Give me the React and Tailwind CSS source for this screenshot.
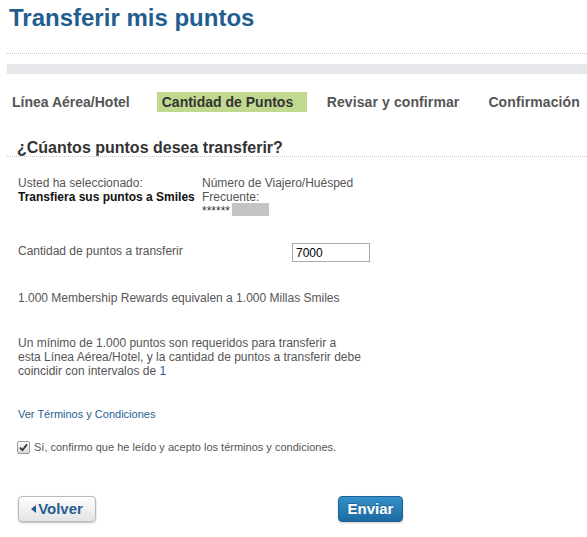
// ── Transferir mis puntos – step 2 ───────────────────────────────────────────
const TABS = [
  { label: 'Línea Aérea/Hotel', cls: 'ml-[12px]' },
  { label: 'Cantidad de Puntos', cls: 'ml-[27px] w-[150px] pl-[5px] bg-[#c1d98f] text-[#333]', active: true },
  { label: 'Revisar y confirmar', cls: 'ml-[20px] tracking-[0.1px]' },
  { label: 'Confirmación', cls: 'ml-[29px] tracking-[0.1px]' },
]

function Tabs() {
  return (
    <div className="flex mt-[18px] h-[20px] text-[14px] leading-[20px] font-bold text-[#555] whitespace-nowrap">
      {TABS.map(t => (
        <div key={t.label} className={t.cls}>{t.label}</div>
      ))}
    </div>
  )
}

function CheckMark() {
  return (
    <span className="w-[13px] h-[13px] flex-shrink-0 rounded-[2px] border border-[#9a9a9a] bg-gradient-to-b from-[#fafafa] to-[#dcdcdc] flex items-center justify-center">
      <svg width="9" height="9" viewBox="0 0 9 9">
        <path d="M1 4.6 L3.4 7.2 L8 1.4" fill="none" stroke="#333" strokeWidth="1.8" />
      </svg>
    </span>
  )
}

export default function App() {
  return (
    <div className="w-[587px] h-[537px] bg-white font-['Liberation_Sans',Arial,sans-serif] text-[#555]">
      {/* Title */}
      <h1 className="pt-[4px] pl-[9px] text-[24px] leading-[28px] font-bold text-[#1f5e8e]">
        Transferir mis puntos
      </h1>
      <div className="mt-[21px] ml-[7px] border-t border-dotted border-[#c8c8c8]" />
      <div className="mt-[10px] ml-[7px] h-[10px] bg-[#e6e7eb]" />

      <Tabs />

      {/* Section heading */}
      <div className="mt-[28px] ml-[7px] pl-[10px] border-b border-dotted border-[#c8c8c8]">
        <h2 className="text-[16px] leading-[16px] font-bold text-[#333]">¿Cúantos puntos desea transferir?</h2>
      </div>

      <div className="pl-[18px] text-[12px] leading-[14px]">
        {/* Selection summary */}
        <div className="mt-[19px] grid grid-cols-[184px_1fr]">
          <div>
            <div>Usted ha seleccionado:</div>
            <div className="font-bold text-[#111]">Transfiera sus puntos a Smiles</div>
          </div>
          <div>
            <div>Número de Viajero/Huésped</div>
            <div>Frecuente:</div>
            <div className="flex items-start">
              <span className="text-[#333]">******</span>
              <span className="inline-block ml-[2px] w-[37px] h-[13px] -mt-[1px] bg-[#c4c4c4]" />
            </div>
          </div>
        </div>

        {/* Amount */}
        <div className="mt-[24px] flex items-start">
          <div className="w-[274px] pt-[2px]">Cantidad de puntos a transferir</div>
          <input
            readOnly
            value="7000"
            className="mt-[1px] w-[78px] h-[19px] border border-[#a9a9a9] bg-white pl-[3px] text-[12px] text-black outline-none"
          />
        </div>

        <p className="mt-[29px]">1.000 Membership Rewards equivalen a 1.000 Millas Smiles</p>

        <p className="mt-[31px] whitespace-nowrap">
          Un mínimo de 1.000 puntos son requeridos para transferir a<br />
          esta Línea Aérea/Hotel, y la cantidad de puntos a transferir debe<br />
          coincidir con intervalos de <span className="text-[#1f5e96]">1</span>
        </p>

        <p className="mt-[29px] text-[11px] text-[#2a5a86]">
          Ver <span className="text-[#1f5e96]">Términos</span> y <span className="text-[#1f5e96]">Condiciones</span>
        </p>

        {/* Confirmation */}
        <label className="mt-[19px] -ml-[1px] flex items-center gap-[4px] text-[11px] leading-[14px]">
          <CheckMark />
          <span>Sí, confirmo que he leído y acepto los términos y condiciones.</span>
        </label>
      </div>

      {/* Actions */}
      <div className="mt-[42px] pl-[18px] flex">
        <button className="w-[78px] h-[26px] rounded-[4px] border border-[#b9b9b9] bg-gradient-to-b from-[#fefefe] to-[#e4e4e4] shadow-[0_1px_2px_rgba(0,0,0,0.25)] flex items-center justify-center text-[15px] font-bold text-[#245f90]">
          <svg width="5" height="8" viewBox="0 0 5 8" className="mr-[2px]">
            <path d="M5 0 L0 4 L5 8 Z" fill="#245f90" />
          </svg>
          Volver
        </button>
        <button className="ml-[242px] w-[65px] h-[26px] rounded-[4px] border border-[#1a6296] bg-gradient-to-b from-[#3590c9] to-[#1b6ba1] shadow-[0_1px_2px_rgba(0,0,0,0.2)] text-[15px] font-bold text-white [text-shadow:0_-1px_0_rgba(0,0,0,0.3)]">
          Enviar
        </button>
      </div>
    </div>
  )
}
